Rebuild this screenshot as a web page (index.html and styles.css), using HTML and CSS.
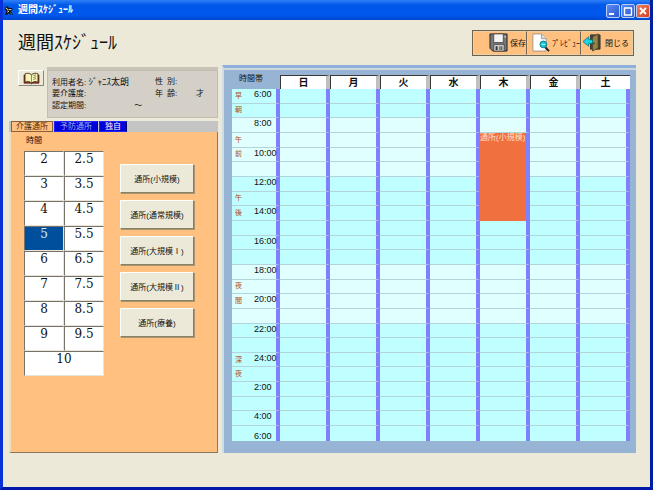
FILE: index.html
```html
<!DOCTYPE html>
<html lang="ja">
<head>
<meta charset="utf-8">
<title>週間ｽｹｼﾞｭｰﾙ</title>
<link rel="stylesheet" href="styles.css">
</head>
<body>
<div class="window">
  <div class="titlebar">
    <svg class="app-icon" viewBox="0 0 12 12" aria-hidden="true"><path d="M1 2l3-1 2 2 4 0v3l-2 1 3 4H8L6 9l-2 2H1l2-4-2-2z" fill="#111"/><path d="M2 3l2 1M6 5h3M4 8l2-1M8 9l1 1" stroke="#e8e0c8" stroke-width="1.2"/><circle cx="4.500" cy="5" r="1" fill="#d8b070"/></svg>
    <span class="caption">週間ｽｹｼﾞｭｰﾙ</span>
    <div class="window-controls">
      <button class="control" aria-label="最小化"><svg viewBox="0 0 12 12"><path d="M2 9h5" stroke="#fff" stroke-width="2"/></svg></button>
      <button class="control" aria-label="最大化"><svg viewBox="0 0 12 12"><path d="M2 3h8M2.500 3v7h7V3" fill="none" stroke="#fff" stroke-width="1.400"/></svg></button>
      <button class="control control-close" aria-label="閉じる"><svg viewBox="0 0 12 12"><path d="M3 3l6 6M9 3l-6 6" stroke="#fff" stroke-width="1.800"/></svg></button>
    </div>
  </div>

  <header class="header">
    <h1>週間ｽｹｼﾞｭｰﾙ</h1>
    <div class="toolbar">
      <button class="tool"><svg viewBox="0 0 20 20"><path d="M1 1h18v18H4l-3-3z" fill="#777" stroke="#222"/><path d="M5 1h10v9H5z" fill="#f4f4f4" stroke="#333" stroke-width=".7"/><path d="M5 12h11v7H5z" fill="#ccc" stroke="#333" stroke-width=".7"/><path d="M7 14h2v4H7zM11 14h1v4h-1zM13 14h1v4h-1z" fill="#333"/><path d="M16.500 3h1v2h-1z" fill="#eee"/></svg><span>保存</span></button>
      <button class="tool"><svg viewBox="0 0 20 20"><path d="M2 1h9l5 5v13H2z" fill="#fff" stroke="#888" stroke-width=".8"/><path d="M11 1v5h5" fill="#ddd" stroke="#888" stroke-width=".8"/><path d="M15 15l4 4" stroke="#222" stroke-width="2"/><circle cx="13" cy="12" r="3.500" fill="#18c8d8" stroke="#087888"/><path d="M11 12h4" stroke="#a8ffff"/></svg><span>ﾌﾟﾚﾋﾞｭｰ</span></button>
      <button class="tool"><svg viewBox="0 0 20 20"><path d="M9 2h10v15H9z" fill="#484838" stroke="#333"/><path d="M11 4l6-3v15l-6 3z" fill="#94824a" stroke="#443c20" stroke-width=".8"/><circle cx="12.500" cy="11" r=".8" fill="#222"/><path d="M1 9l6-5v3h4v4H7v3z" fill="#18d8e8" stroke="#077" stroke-width=".8"/></svg><span>閉じる</span></button>
    </div>
  </header>

  <main class="main">
    <section class="side">
      <div class="client">
        <button class="book" aria-label="利用者一覧"><svg viewBox="0 0 18 14"><path d="M1 3v9h7l1 1 1-1h7V3" fill="#a04028" stroke="#402010" stroke-width=".8"/><path d="M9 3C7 1 4 1 2 2v9c2-1 5-1 7 1 2-2 5-2 7-1V2c-2-1-5-1-7 1z" fill="#f6f3b8" stroke="#302810" stroke-width=".9"/><path d="M9 3v9M11 4l3-1M11 6l3-1M11 8l3-1" stroke="#706840" stroke-width=".8"/></svg></button>
        <div class="client-panel">
          <div class="client-info">
            <span>利用者名: <span class="client-name">ｼﾞｬﾆｽ太朗</span></span><span>性&ensp;別:</span><span></span>
            <span>要介護度:</span><span>年&ensp;齢:</span><span>才</span>
            <span class="period"><span>認定期間:</span><span>～</span></span>
          </div>
        </div>
      </div>
      <div class="tabs" role="tablist">
        <button class="tab tab-active" role="tab" aria-selected="true">介護通所</button>
        <button class="tab tab-dim" role="tab" aria-selected="false">予防通所</button>
        <button class="tab" role="tab" aria-selected="false">独自</button>
      </div>
      <div class="picker" role="tabpanel">
        <div class="hours-block">
          <div class="hours-label" id="hours-label">時間</div>
          <div class="hours" role="group" aria-labelledby="hours-label">
            <button>2</button><button>2.5</button>
            <button>3</button><button>3.5</button>
            <button>4</button><button>4.5</button>
            <button class="selected" aria-pressed="true">5</button><button>5.5</button>
            <button>6</button><button>6.5</button>
            <button>7</button><button>7.5</button>
            <button>8</button><button>8.5</button>
            <button>9</button><button>9.5</button>
            <button class="wide">10</button>
          </div>
        </div>
        <div class="services">
          <button>通所(小規模)</button>
          <button>通所(通常規模)</button>
          <button>通所(大規模Ⅰ)</button>
          <button>通所(大規模Ⅱ)</button>
          <button>通所(療養)</button>
        </div>
      </div>
    </section>

    <section class="schedule">
      <table>
        <colgroup><col class="col-band"><col class="col-time"><col span="7"></colgroup>
        <thead>
          <tr><th colspan="2" class="corner">時間帯</th><th class="day">日</th><th class="day">月</th><th class="day">火</th><th class="day">水</th><th class="day">木</th><th class="day">金</th><th class="day">土</th></tr>
        </thead>
        <tbody>
          <tr><td class="band">早</td><td class="time">6:00</td><td></td><td></td><td></td><td></td><td></td><td></td><td></td></tr>
          <tr><td class="band">朝</td><td class="time"></td><td></td><td></td><td></td><td></td><td></td><td></td><td></td></tr>
          <tr class="pale"><td class="band"></td><td class="time">8:00</td><td></td><td></td><td></td><td></td><td></td><td></td><td></td></tr>
          <tr class="pale"><td class="band">午</td><td class="time"></td><td></td><td></td><td></td><td></td><td class="event" rowspan="6"><div>通所(小規模)</div></td><td></td><td></td></tr>
          <tr class="pale"><td class="band">前</td><td class="time">10:00</td><td></td><td></td><td></td><td></td><td></td><td></td></tr>
          <tr class="pale"><td class="band"></td><td class="time"></td><td></td><td></td><td></td><td></td><td></td><td></td></tr>
          <tr><td class="band"></td><td class="time">12:00</td><td></td><td></td><td></td><td></td><td></td><td></td></tr>
          <tr><td class="band">午</td><td class="time"></td><td></td><td></td><td></td><td></td><td></td><td></td></tr>
          <tr><td class="band">後</td><td class="time">14:00</td><td></td><td></td><td></td><td></td><td></td><td></td></tr>
          <tr><td class="band"></td><td class="time"></td><td></td><td></td><td></td><td></td><td></td><td></td><td></td></tr>
          <tr><td class="band"></td><td class="time">16:00</td><td></td><td></td><td></td><td></td><td></td><td></td><td></td></tr>
          <tr><td class="band"></td><td class="time"></td><td></td><td></td><td></td><td></td><td></td><td></td><td></td></tr>
          <tr class="pale"><td class="band"></td><td class="time">18:00</td><td></td><td></td><td></td><td></td><td></td><td></td><td></td></tr>
          <tr class="pale"><td class="band">夜</td><td class="time"></td><td></td><td></td><td></td><td></td><td></td><td></td><td></td></tr>
          <tr class="pale"><td class="band">間</td><td class="time">20:00</td><td></td><td></td><td></td><td></td><td></td><td></td><td></td></tr>
          <tr class="pale"><td class="band"></td><td class="time"></td><td></td><td></td><td></td><td></td><td></td><td></td><td></td></tr>
          <tr><td class="band"></td><td class="time">22:00</td><td></td><td></td><td></td><td></td><td></td><td></td><td></td></tr>
          <tr><td class="band"></td><td class="time"></td><td></td><td></td><td></td><td></td><td></td><td></td><td></td></tr>
          <tr><td class="band">深</td><td class="time">24:00</td><td></td><td></td><td></td><td></td><td></td><td></td><td></td></tr>
          <tr><td class="band">夜</td><td class="time"></td><td></td><td></td><td></td><td></td><td></td><td></td><td></td></tr>
          <tr><td class="band"></td><td class="time">2:00</td><td></td><td></td><td></td><td></td><td></td><td></td><td></td></tr>
          <tr><td class="band"></td><td class="time"></td><td></td><td></td><td></td><td></td><td></td><td></td><td></td></tr>
          <tr><td class="band"></td><td class="time">4:00</td><td></td><td></td><td></td><td></td><td></td><td></td><td></td></tr>
          <tr><td class="band"></td><td class="time time-end">6:00</td><td></td><td></td><td></td><td></td><td></td><td></td><td></td></tr>
        </tbody>
      </table>
    </section>
  </main>
</div>
</body>
</html>
```
FILE: styles.css
```css
* { box-sizing: border-box; }
body { margin: 0; font-family: "Liberation Sans", "Noto Sans CJK JP", sans-serif; font-size: 8px; color: #111; }
button { font: inherit; color: inherit; margin: 0; padding: 0; border: 0; border-radius: 0; white-space: nowrap; }
.window { min-height: 100vh; display: flex; flex-direction: column; background: #ece9d8; border: 3px solid #0831d9; border-top: 0; border-right-color: #001ea0; border-bottom-color: #0018a8; }

.titlebar { height: 20px; display: flex; align-items: center; gap: 4px; padding-left: 1px; background: linear-gradient(#2f80f8, #0058e8 25%, #0058ee 75%, #0048d0); color: #fff; }
.app-icon { width: 10px; height: 11px; }
.caption { flex: 1; font-size: 10px; font-weight: 700; line-height: 14px; }
.window-controls { display: flex; gap: 1px; padding-top: 2px; }
.control { width: 14px; height: 14px; border: 1px solid #b8cdf8; border-radius: 2px; background: linear-gradient(135deg, #5a8cf0, #2a58d0); }
.control svg { display: block; width: 12px; height: 12px; }
.control-close { background: linear-gradient(135deg, #f08060, #d04020); }

.header { height: 45px; display: flex; justify-content: space-between; align-items: center; padding: 0 16px 0 15px; }
h1 { margin: 0; font-size: 18px; font-weight: 400; line-height: 24px; color: #111; }
.toolbar { display: flex; border: 1px solid #706450; }
.tool { width: 54px; height: 24px; display: flex; align-items: center; justify-content: flex-end; gap: 2px; background: #ffc080; border: 1px solid #e8d0a8; border-right: 1px solid #706450; overflow: hidden; }
.tool:last-child { width: 52px; border-right-color: #e8d0a8; justify-content: flex-start; gap: 4px; }
.tool svg { width: 19px; height: 19px; flex: none; }

.main { display: grid; grid-template-columns: 209px 1fr; gap: 4px; padding: 0 14px 34px 6px; }
.side { display: flex; flex-direction: column; padding-top: 2px; }
.client { display: flex; align-items: flex-start; justify-content: space-between; padding-left: 9px; }
.book { width: 26px; height: 16px; margin-top: 3px; background: #ece9d8; border: 1px solid #fff; border-right-color: #8c887c; border-bottom-color: #8c887c; display: grid; place-items: center; }
.book svg { width: 17px; height: 13px; }
.client-panel { width: 171px; border-top: 3px solid #c8c2b8; }
.client-info { height: 48px; display: grid; grid-template-columns: 103px 41px 1fr; grid-auto-rows: 12px; align-content: center; padding: 0 4px; line-height: 12px; white-space: nowrap; background: #d4d0c8; border: 1px solid #c4bcac; }
.client-name { font-size: 9px; }
.period { grid-column: 1 / -1; display: flex; gap: 48px; }

.tabs { display: flex; gap: 1px; margin-top: 3px; padding-left: 2px; background: #c4c4c4; }
.tab { height: 11px; padding: 0 5px; background: #0000d8; color: #fff; line-height: 9px; border: 1px solid #2020ff; border-right-color: #000070; font-size: 8px; }
.tab-active { background: #ffc080; color: #503010; border-color: #8c6038; padding: 0 4px; }
.tab-dim { color: #a8a8e8; }
.picker { flex: 1; display: flex; align-items: flex-start; gap: 16px; padding: 3px 23px 0 13px; background: #ffc080; border: 1px solid #887860; border-width: 0 1px 1px 0; border-left: 2px solid #f4dcb8; }
.hours-block { flex: 0 0 80px; }
.hours-label { height: 16px; padding-left: 2px; line-height: 12px; }
.hours { display: grid; grid-template-columns: 1fr 1fr; background: #fff; }
.hours button { height: 25px; padding-bottom: 9px; font-family: "DejaVu Serif", serif; font-size: 12px; line-height: 14px; color: #111; background: #fff; border: 1px solid #77736a; border-right-color: #e8e4d8; border-bottom-color: #e8e4d8; }
.hours .selected { background: #004f9c; color: #d8f0ff; }
.hours .wide { grid-column: 1 / -1; }
.services { flex: 1; display: flex; flex-direction: column; gap: 7px; padding-top: 29px; }
.services button { height: 29px; background: #ece9d8; border: 1px solid #fff; border-right-color: #86806c; border-bottom-color: #86806c; box-shadow: 1px 1px 0 #a89468; }

.schedule { padding: 7px 6px 12px 8px; background: #98b4d4; border-top: 3px solid #90b0dc; border-left: 2px solid #d0dce4; box-shadow: inset 0 2px 0 #ccd8dc; }
table { width: 100%; height: 366px; table-layout: fixed; border-collapse: separate; border-spacing: 0; }
.col-band { width: 14px; }
.col-time { width: 34px; }
th, td { padding: 0; }
tr { height: 14px; }
.corner { font-size: 8px; line-height: 8px; font-weight: 400; text-align: left; vertical-align: top; padding-left: 7px; }
.day { font-size: 10px; line-height: 12px; background: #fff; border-top: 1px solid #383838; border-left: 1px solid #383838; border-right: 4px solid #c0c0c0; }
.day:last-child { border-right: 0; }
td { background: #c0ffff; border-right: 4px solid #8080ff; border-bottom: 1px solid #b4d4dc; line-height: 10px; }
.pale td { background: #e0ffff; }
tbody tr:last-child td { border-bottom: 0; }
td.band { border-right: 0; font-size: 7px; color: #b04818; padding-left: 3px; }
td.time { font-size: 9px; padding-left: 8px; white-space: nowrap; vertical-align: top; }
td.time-end { vertical-align: bottom; }
.pale td.event { background: #f07040; color: #ffe0c8; vertical-align: top; border-bottom: 0; }
.event div { overflow: hidden; white-space: nowrap; line-height: 9px; }
```
